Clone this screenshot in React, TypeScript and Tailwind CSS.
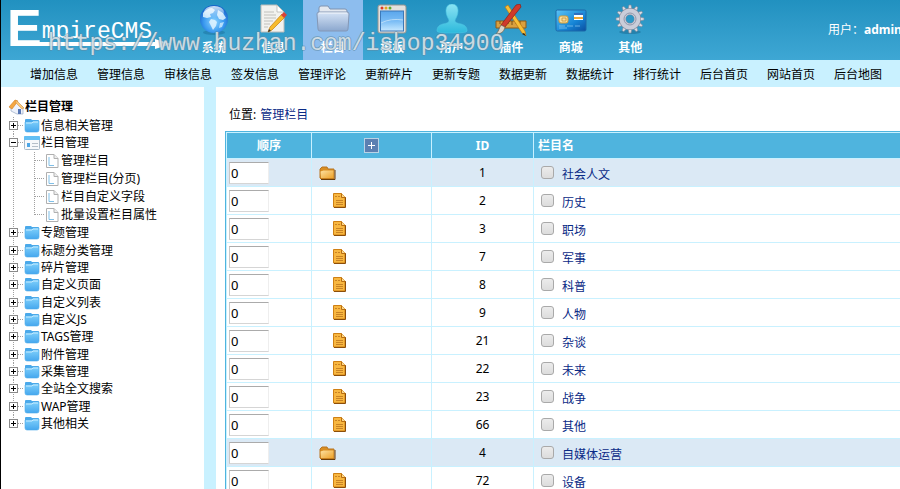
import React from "react";

function Globe() {
  return (
    <svg width="32" height="32" viewBox="0 0 32 32">
      <defs>
        <radialGradient id="globe" cx="0.5" cy="0.6" r="0.6">
          <stop offset="0" stopColor="#8fd6ff" />
          <stop offset="0.6" stopColor="#3b9bf0" />
          <stop offset="1" stopColor="#1560c8" />
        </radialGradient>
        <linearGradient id="shine" x1="0" y1="0" x2="0" y2="1">
          <stop offset="0" stopColor="#fff" stopOpacity="0.8" />
          <stop offset="1" stopColor="#fff" stopOpacity="0" />
        </linearGradient>
      </defs>
      <ellipse cx="16" cy="28.5" rx="11" ry="2.5" fill="#1b6f9d" opacity="0.5" />
      <circle cx="16" cy="15" r="14" fill="url(#globe)" />
      <path d="M5 9c2-3 6-5 9-5l3 2-2 3-3 1 1 3-4 1-4-1zM13 15l4 1 2 2-1 4-3 4-2-4-2-4zM20 6l5 3 3 5-3 2-4-1-2-4z" fill="#e3f5ff" opacity="0.85" />
      <path d="M22 19l4-1-2 5-3 1z" fill="#e3f5ff" opacity="0.7" />
      <ellipse cx="16" cy="8" rx="10" ry="6" fill="url(#shine)" />
    </svg>
  );
}

function Note() {
  return (
    <svg width="32" height="32" viewBox="0 0 32 32">
      <path d="M4 1h16l7 7v20H4z" fill="#f2f2ef" stroke="#bcbcb8" />
      <path d="M20 1v7h7z" fill="#fff" stroke="#b0b0ac" strokeWidth="0.7" />
      <path d="M7 8h10M7 11h12M7 14h12M7 17h9M7 20h6M7 23h4" stroke="#c0c0bc" />
      <path d="M11 28l2-5L25 10l3 3-13 13z" fill="#f7bb2b" stroke="#c47d12" strokeWidth="0.7" />
      <path d="M24 11l3-3 3 3-3 3z" fill="#d7433a" />
      <path d="M11 28l1-3 2 2z" fill="#333" />
    </svg>
  );
}

function BigFolder() {
  return (
    <svg width="34" height="32" viewBox="0 0 34 32">
      <defs>
        <linearGradient id="bf" x1="0" y1="0" x2="0" y2="1">
          <stop offset="0" stopColor="#d6e4f6" />
          <stop offset="1" stopColor="#8ba7ce" />
        </linearGradient>
      </defs>
      <path d="M3 9V4q0-2 2-2h7l2 3h15q2 0 2 2v3z" fill="#e3e8ef" stroke="#7f93b1" />
      <path d="M1 10q0-2 2-2h28q2 0 2 2l-1 15q0 2-2 2H4q-2 0-2-2z" fill="url(#bf)" stroke="#8498b6" />
      <path d="M3 9h28" stroke="#fff" opacity="0.8" />
    </svg>
  );
}

function WindowIcon() {
  return (
    <svg width="32" height="32" viewBox="0 0 32 32">
      <defs>
        <linearGradient id="wi" x1="0" y1="0" x2="0" y2="1">
          <stop offset="0" stopColor="#5aa6ec" />
          <stop offset="0.5" stopColor="#79bcf5" />
          <stop offset="1" stopColor="#c6e8ff" />
        </linearGradient>
      </defs>
      <rect x="2" y="1" width="28" height="28" rx="2" fill="#e3e1de" stroke="#97948f" />
      <rect x="4.5" y="7" width="23" height="20" fill="url(#wi)" stroke="#3c79b8" />
      <path d="M5 19q10-5 22-3" stroke="#b9dcf8" fill="none" />
      <circle cx="6" cy="4" r="1.5" fill="#dc3b25" />
      <circle cx="10" cy="4" r="1.5" fill="#e4a61b" />
      <circle cx="14" cy="4" r="1.5" fill="#62a92c" />
    </svg>
  );
}

function Person() {
  return (
    <svg width="32" height="32" viewBox="0 0 32 32">
      <defs>
        <linearGradient id="pe" x1="0" y1="0" x2="0" y2="1">
          <stop offset="0" stopColor="#8ae3f3" />
          <stop offset="1" stopColor="#2cb9dc" />
        </linearGradient>
      </defs>
      <path
        d="M16 0c4 0 6 3 6 7s-2 7-3 9c0 3 2 3 6 4 4 1 6 3 6 7q0 2-15 2T1 27c0-4 2-6 6-7 4-1 6-1 6-4-1-2-3-5-3-9s2-7 6-7z"
        fill="url(#pe)"
        stroke="#4dc6e2"
        strokeWidth="0.6"
      />
    </svg>
  );
}

function Tools() {
  return (
    <svg width="34" height="32" viewBox="0 0 34 32">
      <path d="M2 17h30v7H2z" fill="#d9a03f" stroke="#8d5b17" />
      <path d="M6 17v3M10 17v4M14 17v3M18 17v4M22 17v3M26 17v4" stroke="#7d5115" />
      <path d="M11 3l3-2 17 26 1 5-4-3z" fill="#f8bf36" stroke="#b97614" strokeWidth="0.7" />
      <path d="M22 1l4-1 1 3L11 23l-4-2z" fill="#cf3a2b" stroke="#8a2018" strokeWidth="0.7" />
      <path d="M7 21l4 2c-1 5-4 7-9 7 3-3 3-6 5-9z" fill="#dcd5c8" stroke="#6d5a44" strokeWidth="0.7" />
      <path d="M30 29l2 3-4-2z" fill="#222" />
    </svg>
  );
}

function Card() {
  return (
    <svg width="32" height="32" viewBox="0 0 32 32">
      <defs>
        <linearGradient id="ca" x1="0" y1="0" x2="1" y2="1">
          <stop offset="0" stopColor="#5cc4f5" />
          <stop offset="0.6" stopColor="#1685d6" />
          <stop offset="1" stopColor="#0a4ea0" />
        </linearGradient>
      </defs>
      <rect x="1" y="6" width="30" height="21" rx="1.5" fill="url(#ca)" stroke="#1c69a8" />
      <rect x="4" y="12" width="9" height="7" rx="2" fill="#f8dc9a" stroke="#d19a35" />
      <path d="M7 14h4v3H7z" fill="none" stroke="#c08b2c" strokeWidth="0.7" />
      <path d="M19 9h9v7h-9z" fill="#fff" />
      <path d="M19 9h9v2h-9z" fill="#2f6fc0" />
      <path d="M19 13h9v2h-9z" fill="#eda937" />
      <path d="M4 22h6M12 22h6M20 22h5M4 24h8" stroke="#8ccaf2" strokeWidth="0.7" />
    </svg>
  );
}

function Gear() {
  const teeth = [0, 30, 60, 90, 120, 150, 180, 210, 240, 270, 300, 330];
  return (
    <svg width="32" height="32" viewBox="0 0 32 32">
      <ellipse cx="16" cy="28" rx="11" ry="2" fill="#1c6f9a" opacity="0.6" />
      {teeth.map((a) => (
        <path key={a} d="M14 6l1-5h2l1 5z" fill="#d9dce4" stroke="#858b9b" strokeWidth="0.6" transform={`rotate(${a} 16 15)`} />
      ))}
      <circle cx="16" cy="15" r="7.5" fill="none" stroke="#82889a" strokeWidth="7" />
      <circle cx="16" cy="15" r="7.5" fill="none" stroke="#c9cdd9" strokeWidth="6" />
      <circle cx="16" cy="15" r="6" fill="none" stroke="#9198ab" />
    </svg>
  );
}

const tabs = [
  { label: "系统", icon: <Globe /> },
  { label: "信息", icon: <Note /> },
  { label: "栏目", icon: <BigFolder />, active: true },
  { label: "模板", icon: <WindowIcon /> },
  { label: "用户", icon: <Person /> },
  { label: "插件", icon: <Tools /> },
  { label: "商城", icon: <Card /> },
  { label: "其他", icon: <Gear /> },
];

const links = [
  "增加信息", "管理信息", "审核信息", "签发信息", "管理评论", "更新碎片", "更新专题",
  "数据更新", "数据统计", "排行统计", "后台首页", "网站首页", "后台地图",
];

const tree: { label: string; children?: string[] }[] = [
  { label: "信息相关管理" },
  { label: "栏目管理", children: ["管理栏目", "管理栏目(分页)", "栏目自定义字段", "批量设置栏目属性"] },
  { label: "专题管理" },
  { label: "标题分类管理" },
  { label: "碎片管理" },
  { label: "自定义页面" },
  { label: "自定义列表" },
  { label: "自定义JS" },
  { label: "TAGS管理" },
  { label: "附件管理" },
  { label: "采集管理" },
  { label: "全站全文搜索" },
  { label: "WAP管理" },
  { label: "其他相关" },
];

const rows = [
  { id: 1, name: "社会人文", top: true },
  { id: 2, name: "历史" },
  { id: 3, name: "职场" },
  { id: 7, name: "军事" },
  { id: 8, name: "科普" },
  { id: 9, name: "人物" },
  { id: 21, name: "杂谈" },
  { id: 22, name: "未来" },
  { id: 23, name: "战争" },
  { id: 66, name: "其他" },
  { id: 4, name: "自媒体运营", top: true },
  { id: 72, name: "设备" },
];

function Toggle({ open, last }: { open?: boolean; last?: boolean }) {
  return (
    <svg width="16" height="17" viewBox="0 0 16 17" className="shrink-0" shapeRendering="crispEdges">
      <path d={last ? "M5.5 0V8" : "M5.5 0V17"} stroke="#a0a0a0" strokeDasharray="1 1" />
      <path d="M10 8.500H16" stroke="#a0a0a0" strokeDasharray="1 1" />
      <rect x="1.5" y="4.5" width="8" height="8" fill="#fff" stroke="#8a8a8a" />
      <path d={open ? "M3 8.500H8" : "M3 8.500H8M5.500 6V11"} stroke="#000" />
    </svg>
  );
}

function Branch({ last }: { last?: boolean }) {
  return (
    <svg width="37" height="18" viewBox="0 0 37 18" className="shrink-0" shapeRendering="crispEdges">
      <path d="M5.500 0V18" stroke="#a0a0a0" strokeDasharray="1 1" />
      <path d={last ? "M26.500 0V9" : "M26.500 0V18"} stroke="#a0a0a0" strokeDasharray="1 1" />
      <path d="M27 8.500H37" stroke="#a0a0a0" strokeDasharray="1 1" />
    </svg>
  );
}

function BlueFolder() {
  return (
    <svg width="16" height="16" viewBox="0 0 16 16" className="shrink-0">
      <defs>
        <linearGradient id="blf" x1="0" y1="0" x2="0" y2="1">
          <stop offset="0" stopColor="#7fd0fb" />
          <stop offset="1" stopColor="#45a7ee" />
        </linearGradient>
      </defs>
      <path d="M1 5V2q0-1 1-1h5l1 1h6q1 0 1 1v3z" fill="#4aa9ea" />
      <path d="M1 4h7l1-1h6v9q0 2-2 2H3q-2 0-2-2z" fill="url(#blf)" stroke="#4fade9" strokeWidth="0.6" />
      <path d="M2 5h6l1-1h5" stroke="#c5ebff" fill="none" />
    </svg>
  );
}

function BlueWindow() {
  return (
    <svg width="16" height="16" viewBox="0 0 16 16" className="shrink-0">
      <rect x="0.5" y="1.5" width="15" height="13" rx="1" fill="#f6f8fa" stroke="#a9bac8" />
      <path d="M0 5V2q0-1 1-1h14q1 0 1 1v3z" fill="#62bff4" />
      <path d="M3 8h3v4H3z" fill="#4da6e6" />
      <path d="M8 8.500h6M8 11.500h6" stroke="#b5bfc8" />
    </svg>
  );
}

function Page() {
  return (
    <svg width="15" height="16" viewBox="0 0 15 16" className="shrink-0">
      <path d="M1.500 1.500h7.500l4 4v9H1.500z" fill="#fff" stroke="#b0b0b0" />
      <path d="M9 1.500v4h4" fill="#eee" stroke="#b0b0b0" />
      <path d="M4 4v8.500H9" fill="none" stroke="#7fbfe8" />
    </svg>
  );
}

function House() {
  return (
    <svg width="17" height="16" viewBox="0 0 17 16" className="shrink-0">
      <path d="M3 8l6-5 6 5v7H9l-6-3z" fill="#eef2fb" stroke="#9aabc4" strokeWidth="0.7" />
      <path d="M1 8l6-7 3 1-6 8z" fill="#f5a742" stroke="#cf7d22" strokeWidth="0.6" />
      <path d="M8 1l8 8-2 1-6-6z" fill="#fbc878" stroke="#cf8b3b" strokeWidth="0.5" />
      <path d="M10 10h3v5h-3z" fill="#5676b5" />
    </svg>
  );
}

function OrangeFolder() {
  return (
    <svg width="17" height="14" viewBox="0 0 17 14" className="ml-[7px]">
      <defs>
        <linearGradient id="of" x1="0" y1="0" x2="1" y2="1">
          <stop offset="0" stopColor="#fde0a0" />
          <stop offset="1" stopColor="#eda22a" />
        </linearGradient>
      </defs>
      <path d="M1 12V3l2-2h5l1 2h6v10H2z" fill="#d98e22" stroke="#b87420" />
      <path d="M1.500 5.500l3-1h10V12H2z" fill="url(#of)" />
      <path d="M2 13.500h14V4" fill="none" stroke="#6b3d08" />
    </svg>
  );
}

function OrangeDoc() {
  return (
    <svg width="13" height="15" viewBox="0 0 13 15" className="ml-[21px]">
      <path d="M.5.5h8l3.500 3.500v10H.500z" fill="#f8b740" stroke="#cf8014" />
      <path d="M12.500 4v10.500H1" fill="none" stroke="#8c4e0a" />
      <path d="M8.500.5v4h4" fill="#fbd88a" stroke="#b96d10" />
      <path d="M2 3.500h2M5 3.500h2M3 7.500h7M3 9.500h7M3 11.500h7" stroke="#c98325" />
    </svg>
  );
}

function Header() {
  return (
    <header className="relative flex h-[60px] shrink-0 justify-between overflow-hidden bg-linear-to-b from-[#2191c0] to-[#3ea7d4] text-white">
      <div className="flex">
        <div className="relative w-[183px] shrink-0">
          <div className="flex items-start pl-[6px]">
            <span className="font-['Liberation_Sans',sans-serif] text-[52px] leading-[56px] font-bold">E</span>
            <span className="pt-5 font-['Liberation_Mono',monospace] text-[23px] leading-6">mpireCMS</span>
          </div>
          <svg className="absolute top-[38px] left-[10px]" width="162" height="12" viewBox="0 0 162 12">
            <path d="M0 4H144V1L160 6L144 11V8H0z" fill="#fff" />
          </svg>
        </div>
        <nav className="grid w-[476px] shrink-0 grid-cols-8">
          {tabs.map((t) => (
            <button
              key={t.label}
              className={`flex flex-col items-center pt-1 text-[12px] leading-4 font-bold ${t.active ? "bg-[#8dbdee]" : ""}`}
            >
              {t.icon}
              <span className="mt-1">{t.label}</span>
            </button>
          ))}
        </nav>
      </div>
      <p className="w-[72px] shrink-0 overflow-hidden pt-[21px] text-[12px] leading-[18px] whitespace-nowrap">
        用户：<b>admin</b>
      </p>
      <span className="pointer-events-none absolute top-[30px] left-[47px] font-['Liberation_Mono',monospace] text-[23px] leading-7 whitespace-nowrap text-white/70 [text-shadow:1px_0_0_#5c88a080,-1px_0_0_#5c88a080,0_1px_0_#5c88a080,0_-1px_0_#5c88a080]">
        https://www.huzhan.com/ishop34900
      </span>
    </header>
  );
}

function Sidebar() {
  return (
    <aside className="w-[203px] shrink-0 pt-[11px] pl-[7px] text-[12px] text-black">
      <h2 className="flex h-[18px] items-center font-bold"><House />栏目管理</h2>
      <ul>
        {tree.map((n, i) => (
          <li key={n.label} className="nth-[3n+1]:pt-px">
            <a href="#" className="flex h-[17px] items-center whitespace-nowrap">
              <Toggle open={!!n.children} last={i === tree.length - 1} />
              {n.children ? <BlueWindow /> : <BlueFolder />}
              <span className="ml-px">{n.label}</span>
            </a>
            {n.children && (
              <ul className="pt-px">
                {n.children.map((c, j) => (
                  <li key={c}>
                    <a href="#" className="flex h-[18px] items-center whitespace-nowrap">
                      <Branch last={j === n.children!.length - 1} />
                      <Page />
                      <span className="ml-px">{c}</span>
                    </a>
                  </li>
                ))}
              </ul>
            )}
          </li>
        ))}
      </ul>
    </aside>
  );
}

function CategoryTable() {
  return (
    <div className="mt-[7px] w-[calc(100%+4px)] border border-[#4fb4de] bg-[#c9f1ff]">
      <table className="w-full table-fixed border-separate border-spacing-px text-[12px] leading-4 text-black">
        <colgroup>
          <col className="w-[84px]" />
          <col className="w-[119px]" />
          <col className="w-[101px]" />
          <col />
        </colgroup>
        <thead>
          <tr className="h-[25px] bg-[#4fb4de] text-white">
            <th className="p-0">顺序</th>
            <th className="p-0">
              <button aria-label="展开" className="mx-auto block size-[15px] border border-[#b9d3e6] bg-[#5b80b2]">
                <svg width="13" height="13" viewBox="0 0 13 13" shapeRendering="crispEdges">
                  <path d="M3 6.500H10M6.500 3V10" stroke="#fff" />
                </svg>
              </button>
            </th>
            <th className="p-0">ID</th>
            <th className="p-0 pl-1 text-left">栏目名</th>
          </tr>
        </thead>
        <tbody>
          {rows.map((r) => (
            <tr key={r.id} className={`h-[27px] ${r.top ? "bg-[#dbe9f5]" : "bg-white"}`}>
              <td className="p-0 pl-0.5">
                <input
                  aria-label={`${r.name} 顺序`}
                  defaultValue="0"
                  className="block h-[22px] w-10 border border-t-[#ababab] border-r-[#eeeeee] border-b-[#d5d5d5] border-l-[#c8c8c8] bg-white pl-px text-[13px]"
                />
              </td>
              <td className="p-0">{r.top ? <OrangeFolder /> : <OrangeDoc />}</td>
              <td className="p-0 text-center">{r.id}</td>
              <td className="p-0">
                <label className="flex items-start gap-2 pt-1 pl-[7px] text-[#0a2a86]">
                  <input
                    type="checkbox"
                    className="size-[13px] appearance-none rounded-[3px] border border-[#a9a9a9] bg-linear-to-b from-[#ececec] to-[#dcdcdc]"
                  />
                  <a href="#" className="pt-px">{r.name}</a>
                </label>
              </td>
            </tr>
          ))}
        </tbody>
      </table>
    </div>
  );
}

export default function App() {
  return (
    <div className="flex h-screen flex-col overflow-hidden border-l border-black bg-white font-['Noto_Sans','Noto_Sans_CJK_SC',sans-serif]">
      <Header />
      <nav className="flex h-[27px] shrink-0 items-center overflow-hidden bg-[#c9f1ff] pt-0.5 pl-[29px] text-[12px] text-black">
        {links.map((l) => (
          <a key={l} href="#" className="w-[67px] shrink-0">{l}</a>
        ))}
      </nav>
      <div className="flex min-h-0 flex-1">
        <Sidebar />
        <div className="w-3 shrink-0 bg-[#c9f1ff]" />
        <main className="min-w-0 flex-1 overflow-hidden pt-[19px] pl-[9px]">
          <p className="flex gap-1 pl-1 text-[12px] leading-[18px] text-black">
            位置: <a href="#" className="text-[#0a2a86]">管理栏目</a>
          </p>
          <CategoryTable />
        </main>
      </div>
    </div>
  );
}
